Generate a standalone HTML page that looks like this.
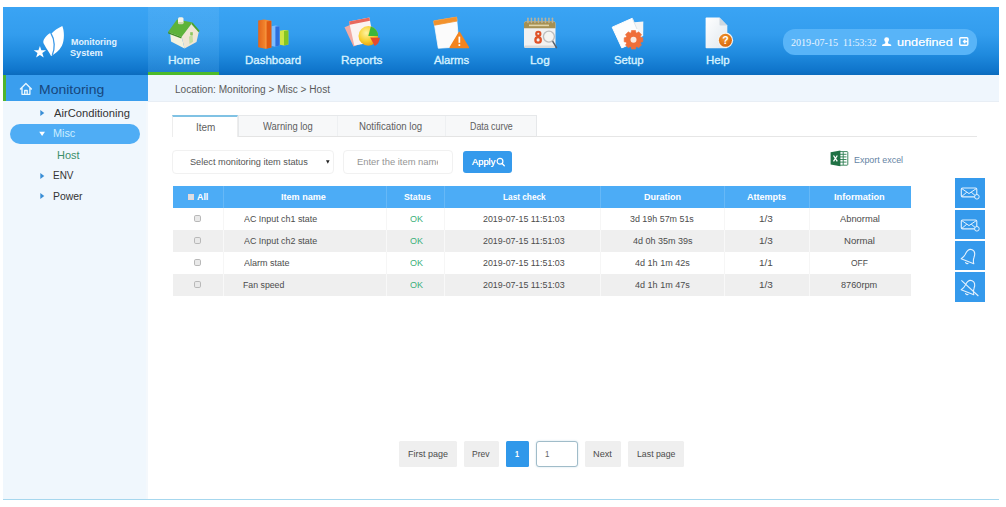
<!DOCTYPE html>
<html lang="en"><head><meta charset="utf-8"><title>Monitoring System</title>
<style>
html,body{margin:0;padding:0;background:#fff;}
body{width:1006px;height:507px;position:relative;overflow:hidden;font-family:"Liberation Sans",sans-serif;}
.t{position:absolute;white-space:nowrap;transform-origin:0 0;}
.b{position:absolute;box-sizing:border-box;}
svg{position:absolute;overflow:visible;}
</style></head><body>

<div class="b" id="hdr" style="left:3px;top:7px;width:996px;height:68.4px;background:linear-gradient(#3aa4f4 0%,#339dee 40%,#1f8ade 70%,#1076cc 92%,#0b6bbd 100%);"></div>
<div class="b" style="left:148.3px;top:7px;width:70.4px;height:68.4px;background:linear-gradient(rgba(255,255,255,0.07),rgba(120,200,255,0.18));border-bottom:3.9px solid #4dba2a;"></div>
<svg id="logo" style="left:0;top:0" width="130" height="75" viewBox="0 0 130 75">
<path d="M62.28 25.96 C64.4 30.93 64.7 39.88 61.9 45.84 C59.4 50.81 54.82 54.29 51.04 55.98 C49.35 52.8 46.37 48.83 44.38 44.85 C43.19 42.86 42.89 41.37 43.89 39.38 C45.38 36.9 47.86 34.41 49.85 33.22 L51.04 33.92 C53.83 30.93 57.8 27.95 62.28 25.96 Z" fill="#fff"/>
<path d="M51.1 33.7 C55 39.9 55 48.8 52.3 55" fill="none" stroke="#3a98e8" stroke-width="1.3"/>
<polygon points="39.9,45.9 41.4,50.3 46.1,50.3 42.3,53.1 43.7,57.6 39.9,54.9 36.1,57.6 37.5,53.1 33.7,50.3 38.4,50.3" fill="#fff"/>
</svg>
<span class="t" style="left:70.6px;top:35.64px;font-size:9.4px;line-height:12px;transform:scaleX(0.9471);color:#e2f3ff;font-weight:bold;">Monitoring</span>
<span class="t" style="left:70.3px;top:46.54px;font-size:9.4px;line-height:12px;transform:scaleX(0.9786);color:#e2f3ff;font-weight:bold;">System</span>
<span class="t" style="left:167.7px;top:52.95px;font-size:11.4px;line-height:15px;transform:scaleX(1.0460);color:#d6f2ff;-webkit-text-stroke:0.35px #d6f2ff;">Home</span>
<span class="t" style="left:244.7px;top:52.95px;font-size:11.4px;line-height:15px;transform:scaleX(1.0092);color:#d6f2ff;-webkit-text-stroke:0.35px #d6f2ff;">Dashboard</span>
<span class="t" style="left:341.0px;top:52.95px;font-size:11.4px;line-height:15px;transform:scaleX(1.0372);color:#d6f2ff;-webkit-text-stroke:0.35px #d6f2ff;">Reports</span>
<span class="t" style="left:433.5px;top:52.95px;font-size:11.4px;line-height:15px;transform:scaleX(0.9934);color:#d6f2ff;-webkit-text-stroke:0.35px #d6f2ff;">Alarms</span>
<span class="t" style="left:529.8px;top:52.95px;font-size:11.4px;line-height:15px;transform:scaleX(1.0374);color:#d6f2ff;-webkit-text-stroke:0.35px #d6f2ff;">Log</span>
<span class="t" style="left:613.9px;top:52.95px;font-size:11.4px;line-height:15px;transform:scaleX(0.9928);color:#d6f2ff;-webkit-text-stroke:0.35px #d6f2ff;">Setup</span>
<span class="t" style="left:705.7px;top:52.95px;font-size:11.4px;line-height:15px;transform:scaleX(1.0069);color:#d6f2ff;-webkit-text-stroke:0.35px #d6f2ff;">Help</span>
<svg id="ic-home" style="left:166px;top:15px" width="36" height="36" viewBox="166 15 36 36">
<polygon points="170,31.5 181.5,36 184.5,48.5 171,41.5" fill="#f3f2de"/>
<polygon points="181.5,36 191.5,23 199,31 196.5,42 184.5,48.5" fill="#efe6d4"/>
<polygon points="168,32 177,19.5 192.5,22.5 181.5,37" fill="#5db33a"/>
<polygon points="168,32 181.5,37 181.3,38.6 168.2,33.4" fill="#3f8f25"/>
<polygon points="192.5,22.5 199.6,30.8 198.6,32.2 191.5,24.2" fill="#4da32e"/>
<rect x="178" y="17.300" width="5.500" height="6.500" rx="1.500" fill="#f6f4e6"/>
<rect x="178" y="22" width="5.500" height="2.200" rx="1.100" fill="#cfd8b0"/>
<polygon points="189,36.800 192.5,34.200 193,41.800 189.5,44" fill="#c4dea0"/>
<rect x="190.200" y="32.200" width="2.600" height="3" fill="#8cc65e"/>
</svg>
<svg id="ic-dash" style="left:255px;top:15px" width="36" height="36" viewBox="255 15 36 36">
<defs>
<linearGradient id="go" x1="0" x2="1"><stop offset="0" stop-color="#e2641a"/><stop offset="0.6" stop-color="#f58a30"/><stop offset="1" stop-color="#f58a30"/></linearGradient>
<linearGradient id="gb" x1="0" x2="1"><stop offset="0" stop-color="#6fb4ff"/><stop offset="1" stop-color="#2a78e0"/></linearGradient>
<linearGradient id="gg" x1="0" x2="1"><stop offset="0" stop-color="#c6e23a"/><stop offset="1" stop-color="#8cc81e"/></linearGradient>
</defs>
<polygon points="279.8,30.8 284,30 288.3,30.600 288.3,44.400 284,45.600 279.8,44.800" fill="#cfe646"/>
<polygon points="284,30.9 288.3,30.600 288.3,44.400 284,45.600" fill="#86c522"/>
<polygon points="271.5,26.2 275.4,25.400 279.6,26.2 279.6,45.600 275.4,46.800 271.5,46" fill="#7dbdff"/>
<polygon points="275.4,26.5 279.6,26.2 279.6,45.600 275.4,46.800" fill="#2c6fdc"/>
<polygon points="258.2,20.5 264,19.6 271.3,20.8 271.3,47.6 265.5,48.8 258.2,47.2" fill="url(#go)"/>
<polygon points="266.300,21.5 271.3,20.8 271.3,47.6 266.300,48.8" fill="#df5a12"/>
<path d="M266 21.300 V48.600" stroke="#f9a050" stroke-width="0.7"/>
</svg>
<svg id="ic-rep" style="left:342px;top:15px" width="42" height="36" viewBox="342 15 42 36">
<defs><radialGradient id="gy" cx="0.4" cy="0.35" r="0.7"><stop offset="0" stop-color="#fff3a0"/><stop offset="0.6" stop-color="#f7cf2e"/><stop offset="1" stop-color="#e89a10"/></radialGradient></defs>
<polygon points="344.5,27.3 363,19.5 371,40 353.5,46.5" fill="#f2aaa2"/>
<polygon points="349,21.5 369.4,17.5 374,42 354.3,45.5" fill="#fbf3f1"/>
<polygon points="349,21.5 369.4,17.5 370,20.700 349.700,24.800" fill="#e8685c"/>
<circle cx="368.3" cy="35.9" r="9.8" fill="url(#gy)"/>
<path d="M368.3 35.9 L370.84 26.43 A9.8 9.8 0 0 1 378.1 35.9 Z" fill="#3cb63a"/>
<path d="M370.2 37.4 L379.79 37.74 A9.6 9.6 0 0 1 374.71 45.88 Z" fill="#e54a2e"/>
</svg>
<svg id="ic-alm" style="left:430px;top:15px" width="42" height="36" viewBox="430 15 42 36">
<polygon points="433.9,21.1 456.5,17.3 459.2,47 438.3,48.2" fill="#fbfbfb" stroke="#fbfbfb" stroke-width="0.8" stroke-linejoin="round"/>
<polygon points="433.7,20.9 456.6,17.1 457,21.1 434.4,25.2" fill="#f2922c" stroke="#f2922c" stroke-width="0.8" stroke-linejoin="round"/>
<polygon points="459.3,32.6 468.2,47.4 450.4,47.4" fill="#f4841e" stroke="#f4841e" stroke-width="1.800" stroke-linejoin="round"/>
<rect x="458.5" y="36.6" width="1.7" height="6.2" fill="#fff"/><rect x="458.5" y="44.2" width="1.7" height="1.8" fill="#fff"/>
</svg>
<svg id="ic-log" style="left:520px;top:15px" width="42" height="36" viewBox="520 15 42 36">
<rect x="524" y="21.3" width="31.5" height="26.6" rx="2.5" fill="#f1f1f1"/>
<path d="M526.5 21.3 H553 a2.5 2.5 0 0 1 2.5 2.5 V28.2 H524 V23.8 a2.5 2.5 0 0 1 2.500 -2.5 Z" fill="#a59052"/>
<rect x="524" y="45.6" width="31.5" height="2.3" rx="1.2" fill="#d9d9d9"/>
<g fill="#b9b39c"><rect x="527.2" y="17.600" width="1.500" height="5.600" rx="0.7"/><rect x="530.7" y="17.600" width="1.500" height="5.600" rx="0.7"/><rect x="534.2" y="17.600" width="1.500" height="5.600" rx="0.7"/><rect x="537.7" y="17.600" width="1.500" height="5.600" rx="0.7"/><rect x="541.2" y="17.600" width="1.500" height="5.600" rx="0.7"/><rect x="544.7" y="17.600" width="1.500" height="5.600" rx="0.7"/><rect x="548.2" y="17.600" width="1.500" height="5.600" rx="0.7"/><rect x="551.7" y="17.600" width="1.500" height="5.600" rx="0.7"/></g>
<rect x="529" y="24.6" width="20" height="1.6" fill="#f0e6c0" opacity="0.8"/>
<circle cx="538.3" cy="33.8" r="2.1" fill="none" stroke="#df5228" stroke-width="2.1"/><circle cx="538.1" cy="39.9" r="2.700" fill="none" stroke="#df5228" stroke-width="2.300"/>
<circle cx="548.900" cy="36.600" r="5.500" fill="#f4f4f2" stroke="#bdbdbd" stroke-width="1.400"/>
<path d="M552.900 41.600 L556.500 47.600" stroke="#5a6068" stroke-width="1.500" stroke-linecap="round"/>
</svg>
<svg id="ic-set" style="left:608px;top:15px" width="42" height="36" viewBox="608 15 42 36">
<polygon points="634.2,22.3 643.3,21.400 643.2,36 634.5,40" fill="#f4f5f6"/>
<polygon points="612.2,27.2 632.2,18.300 641.5,39 621.8,47.900" fill="#fdfdfd" stroke="#fdfdfd" stroke-width="1" stroke-linejoin="round"/>
<path d="M632.6 18.9 L637 29" stroke="#c9d3dc" stroke-width="0.6"/>
<g transform="translate(633.5 39.8)">
<g fill="#ef6f3a" stroke="#ef6f3a" stroke-width="0.6" stroke-linejoin="round">
<circle r="7.400"/>
<path transform="rotate(0)" d="M-2.500 -6.500 L-2 -9.300 H2 L2.500 -6.500 Z"/><path transform="rotate(45)" d="M-2.500 -6.500 L-2 -9.300 H2 L2.500 -6.500 Z"/><path transform="rotate(90)" d="M-2.500 -6.500 L-2 -9.300 H2 L2.500 -6.500 Z"/><path transform="rotate(135)" d="M-2.500 -6.500 L-2 -9.300 H2 L2.500 -6.500 Z"/><path transform="rotate(180)" d="M-2.500 -6.500 L-2 -9.300 H2 L2.500 -6.500 Z"/><path transform="rotate(225)" d="M-2.500 -6.500 L-2 -9.300 H2 L2.500 -6.500 Z"/><path transform="rotate(270)" d="M-2.500 -6.500 L-2 -9.300 H2 L2.500 -6.500 Z"/><path transform="rotate(315)" d="M-2.500 -6.500 L-2 -9.300 H2 L2.500 -6.500 Z"/>
</g>
<circle r="3" fill="#f9e9e0"/>
</g>
</svg>
<svg id="ic-help" style="left:700px;top:15px" width="42" height="36" viewBox="700 15 42 36">
<defs><linearGradient id="gd" x1="0" x2="1" y1="0" y2="1"><stop offset="0" stop-color="#ffffff"/><stop offset="1" stop-color="#dfe7ee"/></linearGradient>
<radialGradient id="gq" cx="0.4" cy="0.35" r="0.7"><stop offset="0" stop-color="#f39a2e"/><stop offset="1" stop-color="#d6620a"/></radialGradient></defs>
<path d="M706.400 17.600 H719.500 L727.300 25.600 V47.400 a0.800 0.800 0 0 1 -0.800 0.800 H706.400 a0.800 0.800 0 0 1 -0.800 -0.800 V18.400 a0.800 0.800 0 0 1 0.800 -0.800 Z" fill="url(#gd)"/>
<path d="M719.500 17.600 L727.300 25.600 H720.300 a0.800 0.800 0 0 1 -0.800 -0.800 Z" fill="#cfd8e0"/>
<circle cx="725.400" cy="40.300" r="7.700" fill="#f4f4f0"/>
<circle cx="725.400" cy="40.300" r="6.500" fill="url(#gq)"/>
<text x="725.400" y="44.1" font-family="Liberation Sans, sans-serif" font-weight="bold" font-size="10.5" text-anchor="middle" fill="#fff">?</text>
</svg>
<div class="b" style="left:782.9px;top:29px;width:194.6px;height:26.200px;border-radius:12px;background:#58b4f8;"></div>
<span class="t" style="left:791.4px;top:35.76px;font-size:10.2px;line-height:13px;transform:scaleX(0.9881);color:#eaf5ff;font-family:'Liberation Serif',serif;">2019-07-15</span>
<span class="t" style="left:843.1px;top:35.76px;font-size:10.2px;line-height:13px;transform:scaleX(0.9319);color:#eaf5ff;font-family:'Liberation Serif',serif;">11:53:32</span>
<svg style="left:881px;top:36px" width="12" height="12" viewBox="881 36 12 12"><circle cx="886.65" cy="39.7" r="2.45" fill="#fff"/><path d="M885.6 41 h2.1 l0.5 2.4 l2.6 1 a0.6 0.6 0 0 1 0.4 0.6 v1.1 h-9.100 v-1.1 a0.6 0.6 0 0 1 0.4 -0.6 l2.6 -1 Z" fill="#fff"/></svg>
<span class="t" style="left:897.1px;top:34.28px;font-size:11.6px;line-height:15px;transform:scaleX(1.0935);color:#f4faff;text-shadow:0 0 0.5px #f4faff;">undefined</span>
<svg style="left:959px;top:36px" width="12" height="12" viewBox="959 36 12 12"><rect x="959.8" y="37.7" width="8" height="7.600" rx="1" fill="none" stroke="#fff" stroke-width="1.400"/><path d="M968 41.5 H963.6 M965.3 39.7 L963.5 41.5 L965.3 43.3" stroke="#fff" stroke-width="1.300" fill="none"/></svg>
<div class="b" style="left:3px;top:75.4px;width:144.6px;height:423.6px;background:#f0f7fd;"></div>
<div class="b" style="left:145.600px;top:102px;width:2px;height:397px;background:#f4f8fc;"></div>
<div class="b" style="left:3px;top:75.4px;width:144.5px;height:25.900px;background:#3a9eee;border-left:3.6px solid #4fb52e;"></div>
<svg style="left:19px;top:82px" width="14" height="14" viewBox="19 82 14 14"><path d="M20.400 89 L25.900 83.500 L31.400 89 M22 87.800 V94.300 H29.900 V87.800 M24.700 94.300 V90.500 H27.200 V94.300" fill="none" stroke="#e6f6ff" stroke-width="1.350" stroke-linejoin="round" stroke-linecap="round"/></svg>
<span class="t" style="left:38.6px;top:81.33px;font-size:13.2px;line-height:17px;transform:scaleX(1.0586);color:#17467c;">Monitoring</span>
<div class="b" style="left:10.100px;top:123.5px;width:130.100px;height:20.600px;border-radius:10.300px;background:#4fadf5;"></div>
<svg style="left:40.2px;top:109.3px" width="6" height="8" viewBox="0 0 6 8"><polygon points="0.300,1.100 4.300,4 0.300,6.900" fill="#3a8fd6"/></svg>
<span class="t" style="left:54.2px;top:105.89px;font-size:11px;line-height:14px;transform:scaleX(1.0179);color:#333;">AirConditioning</span>
<svg style="left:39.4px;top:130.6px" width="8" height="6" viewBox="0 0 8 6"><polygon points="0.200,0.800 6,0.800 3.100,5" fill="#fff"/></svg>
<span class="t" style="left:53.3px;top:126.49px;font-size:11px;line-height:14px;transform:scaleX(0.9852);color:#cbeeff;">Misc</span>
<span class="t" style="left:57.3px;top:147.79px;font-size:11px;line-height:14px;transform:scaleX(0.9983);color:#3b8f6a;">Host</span>
<svg style="left:40.2px;top:171.6px" width="6" height="8" viewBox="0 0 6 8"><polygon points="0.300,1.100 4.300,4 0.300,6.900" fill="#3a8fd6"/></svg>
<span class="t" style="left:53.4px;top:168.29px;font-size:11px;line-height:14px;transform:scaleX(0.9045);color:#333;">ENV</span>
<svg style="left:40.2px;top:192.4px" width="6" height="8" viewBox="0 0 6 8"><polygon points="0.300,1.100 4.300,4 0.300,6.900" fill="#3a8fd6"/></svg>
<span class="t" style="left:53.3px;top:189.09px;font-size:11px;line-height:14px;transform:scaleX(0.9470);color:#333;">Power</span>
<div class="b" style="left:147.600px;top:75.4px;width:851.400px;height:26.800px;background:#eff6fd;border-bottom:1.500px solid #e8eef5;"></div>
<span class="t" style="left:174.7px;top:82.53px;font-size:10px;line-height:13px;transform:scaleX(1.0067);color:#5a5a5a;">Location: Monitoring &gt; Misc &gt; Host</span>
<div class="b" style="left:172.300px;top:136.200px;width:804.500px;height:1px;background:#e6e6e6;"></div>
<div class="b" style="left:238px;top:115.200px;width:298.500px;height:22px;background:#f7f8f9;border:1px solid #e6e8ea;border-bottom:1px solid #e4e4e4;"></div>
<div class="b" style="left:336.500px;top:116.200px;width:1px;height:20px;background:#eef0f2;"></div>
<div class="b" style="left:444.500px;top:116.200px;width:1px;height:20px;background:#eef0f2;"></div>
<div class="b" style="left:172.300px;top:115.200px;width:66px;height:22px;background:#fff;border-top:2.2px solid #80c2e4;border-left:1px solid #ededed;border-right:1px solid #ededed;"></div>
<span class="t" style="left:195.5px;top:120.64px;font-size:10px;line-height:13px;transform:scaleX(0.9955);color:#5e5e5e;">Item</span>
<span class="t" style="left:262.5px;top:119.94px;font-size:10px;line-height:13px;transform:scaleX(0.9405);color:#5e5e5e;">Warning log</span>
<span class="t" style="left:359.2px;top:119.94px;font-size:10px;line-height:13px;transform:scaleX(0.9637);color:#5e5e5e;">Notification log</span>
<span class="t" style="left:469.7px;top:119.94px;font-size:10px;line-height:13px;transform:scaleX(0.8834);color:#5e5e5e;">Data curve</span>
<div class="b" style="left:172.300px;top:150px;width:161.700px;height:23.500px;border:1px solid #f1f1f1;border-radius:4px;background:#fff;"></div>
<span class="t" style="left:189.5px;top:155.67px;font-size:9.6px;line-height:12px;transform:scaleX(0.9561);color:#555;">Select monitoring item status</span>
<svg style="left:325.200px;top:158.800px" width="6" height="6" viewBox="0 0 6 6"><polygon points="1,1.300 4.600,1.300 2.800,4.800" fill="#222"/></svg>
<div class="b" style="left:342.500px;top:150px;width:110.500px;height:23.500px;border:1px solid #f1f1f1;border-radius:4px;background:#fff;"></div>
<span class="t" style="left:356.7px;top:155.57px;font-size:9.6px;line-height:12px;transform:scaleX(0.9797);color:#959595;">Enter the item name</span>
<div class="b" style="left:438.3px;top:154px;width:8px;height:16px;background:#fff;"></div>
<div class="b" style="left:462.800px;top:151.200px;width:48.800px;height:21.600px;border-radius:3px;background:#359aec;"></div>
<span class="t" style="left:472.1px;top:155.40px;font-size:9.8px;line-height:13px;transform:scaleX(0.9522);color:#fff;text-shadow:0 0 0.5px #fff;">Apply</span>
<svg style="left:495.6px;top:157.2px" width="10" height="10" viewBox="0 0 10 10"><circle cx="4" cy="4.300" r="2.900" fill="none" stroke="#fff" stroke-width="1.200"/><path d="M6.100 6.500 L8.300 8.800" stroke="#fff" stroke-width="1.300" stroke-linecap="round"/></svg>
<svg style="left:830px;top:150px" width="19" height="17" viewBox="0 0 19 17">
<rect x="7.500" y="1.600" width="10.300" height="13.600" rx="0.800" fill="#fff" stroke="#2a7d4f" stroke-width="0.900"/>
<path d="M10 4.300 H16.500 M10 6.900 H16.500 M10 9.500 H16.500 M10 12.100 H16.500 M13.200 2 V15" stroke="#2a7d4f" stroke-width="0.900"/>
<path d="M0.600 2.200 L10.400 0.500 V16.300 L0.600 14.600 Z" fill="#207245"/>
<path d="M3.500 5.500 L7.300 11.300 M7.300 5.500 L3.500 11.300" stroke="#fff" stroke-width="1.300"/>
</svg>
<span class="t" style="left:854.3px;top:154.47px;font-size:9.6px;line-height:12px;transform:scaleX(0.9300);color:#6584a4;">Export excel</span>
<div class="b" style="left:172.5px;top:186.0px;width:738.7px;height:21.8px;background:#4cacf6;"></div>
<div class="b" style="left:172.5px;top:229.7px;width:738.7px;height:22.2px;background:#efefef;"></div>
<div class="b" style="left:172.5px;top:273.6px;width:738.7px;height:22.4px;background:#efefef;"></div>
<div class="b" style="left:222.5px;top:186.0px;width:1px;height:21.8px;background:#66b8f7;"></div>
<div class="b" style="left:222.5px;top:207.8px;width:1px;height:88.2px;background:rgba(255,255,255,0.55);"></div>
<div class="b" style="left:386.1px;top:186.0px;width:1px;height:21.8px;background:#66b8f7;"></div>
<div class="b" style="left:386.1px;top:207.8px;width:1px;height:88.2px;background:rgba(255,255,255,0.55);"></div>
<div class="b" style="left:443.8px;top:186.0px;width:1px;height:21.8px;background:#66b8f7;"></div>
<div class="b" style="left:443.8px;top:207.8px;width:1px;height:88.2px;background:rgba(255,255,255,0.55);"></div>
<div class="b" style="left:600.1px;top:186.0px;width:1px;height:21.8px;background:#66b8f7;"></div>
<div class="b" style="left:600.1px;top:207.8px;width:1px;height:88.2px;background:rgba(255,255,255,0.55);"></div>
<div class="b" style="left:723.5px;top:186.0px;width:1px;height:21.8px;background:#66b8f7;"></div>
<div class="b" style="left:723.5px;top:207.8px;width:1px;height:88.2px;background:rgba(255,255,255,0.55);"></div>
<div class="b" style="left:808.5px;top:186.0px;width:1px;height:21.8px;background:#66b8f7;"></div>
<div class="b" style="left:808.5px;top:207.8px;width:1px;height:88.2px;background:rgba(255,255,255,0.55);"></div>
<div class="b" style="left:222.5px;top:207.8px;width:1px;height:21.9px;background:#f6f6f6;"></div>
<div class="b" style="left:222.5px;top:251.9px;width:1px;height:21.7px;background:#f6f6f6;"></div>
<div class="b" style="left:386.1px;top:207.8px;width:1px;height:21.9px;background:#f6f6f6;"></div>
<div class="b" style="left:386.1px;top:251.9px;width:1px;height:21.7px;background:#f6f6f6;"></div>
<div class="b" style="left:443.8px;top:207.8px;width:1px;height:21.9px;background:#f6f6f6;"></div>
<div class="b" style="left:443.8px;top:251.9px;width:1px;height:21.7px;background:#f6f6f6;"></div>
<div class="b" style="left:600.1px;top:207.8px;width:1px;height:21.9px;background:#f6f6f6;"></div>
<div class="b" style="left:600.1px;top:251.9px;width:1px;height:21.7px;background:#f6f6f6;"></div>
<div class="b" style="left:723.5px;top:207.8px;width:1px;height:21.9px;background:#f6f6f6;"></div>
<div class="b" style="left:723.5px;top:251.9px;width:1px;height:21.7px;background:#f6f6f6;"></div>
<div class="b" style="left:808.5px;top:207.8px;width:1px;height:21.9px;background:#f6f6f6;"></div>
<div class="b" style="left:808.5px;top:251.9px;width:1px;height:21.7px;background:#f6f6f6;"></div>
<div class="b" style="left:188.300px;top:193.900px;width:6px;height:6px;background:#d4e2ec;border:1px solid #ead8d6;"></div>
<span class="t" style="left:196.5px;top:191.52px;font-size:8.6px;line-height:11px;transform:scaleX(1.0312);color:#fff;font-weight:bold;">All</span>
<span class="t" style="left:281.4px;top:191.52px;font-size:8.6px;line-height:11px;transform:scaleX(1.0534);color:#fff;font-weight:bold;">Item name</span>
<span class="t" style="left:403.7px;top:191.52px;font-size:8.6px;line-height:11px;transform:scaleX(1.0235);color:#fff;font-weight:bold;">Status</span>
<span class="t" style="left:503.1px;top:191.52px;font-size:8.6px;line-height:11px;transform:scaleX(0.9612);color:#fff;font-weight:bold;">Last check</span>
<span class="t" style="left:644.1px;top:191.52px;font-size:8.6px;line-height:11px;transform:scaleX(1.0510);color:#fff;font-weight:bold;">Duration</span>
<span class="t" style="left:746.8px;top:191.52px;font-size:8.6px;line-height:11px;transform:scaleX(1.0487);color:#fff;font-weight:bold;">Attempts</span>
<span class="t" style="left:834.2px;top:191.52px;font-size:8.6px;line-height:11px;transform:scaleX(1.0736);color:#fff;font-weight:bold;">Information</span>
<div class="b" style="left:194.300px;top:214.7px;width:6.600px;height:7.200px;border:1px solid #b8b8b8;border-radius:1.800px;background:#e9e9e9;"></div>
<span class="t" style="left:243.9px;top:212.57px;font-size:9.6px;line-height:12px;transform:scaleX(0.9269);color:#4c4c4c;">AC Input ch1 state</span>
<span class="t" style="left:410.4px;top:212.57px;font-size:9.6px;line-height:12px;transform:scaleX(0.9388);color:#3cb07a;">OK</span>
<span class="t" style="left:483.4px;top:212.57px;font-size:9.6px;line-height:12px;transform:scaleX(0.9242);color:#4c4c4c;">2019-07-15 11:51:03</span>
<span class="t" style="left:630.3px;top:212.57px;font-size:9.6px;line-height:12px;transform:scaleX(0.9275);color:#4c4c4c;">3d 19h 57m 51s</span>
<span class="t" style="left:758.9px;top:212.57px;font-size:9.6px;line-height:12px;transform:scaleX(1.0408);color:#4c4c4c;">1/3</span>
<span class="t" style="left:840.0px;top:212.57px;font-size:9.6px;line-height:12px;transform:scaleX(0.9719);color:#4c4c4c;">Abnormal</span>
<div class="b" style="left:194.300px;top:236.7px;width:6.600px;height:7.200px;border:1px solid #b8b8b8;border-radius:1.800px;background:#e9e9e9;"></div>
<span class="t" style="left:243.9px;top:234.62px;font-size:9.6px;line-height:12px;transform:scaleX(0.9269);color:#4c4c4c;">AC Input ch2 state</span>
<span class="t" style="left:410.4px;top:234.62px;font-size:9.6px;line-height:12px;transform:scaleX(0.9388);color:#3cb07a;">OK</span>
<span class="t" style="left:483.4px;top:234.62px;font-size:9.6px;line-height:12px;transform:scaleX(0.9242);color:#4c4c4c;">2019-07-15 11:51:03</span>
<span class="t" style="left:632.7px;top:234.62px;font-size:9.6px;line-height:12px;transform:scaleX(0.9372);color:#4c4c4c;">4d 0h 35m 39s</span>
<span class="t" style="left:758.9px;top:234.62px;font-size:9.6px;line-height:12px;transform:scaleX(1.0408);color:#4c4c4c;">1/3</span>
<span class="t" style="left:844.0px;top:234.62px;font-size:9.6px;line-height:12px;transform:scaleX(0.9993);color:#4c4c4c;">Normal</span>
<div class="b" style="left:194.300px;top:258.6px;width:6.600px;height:7.200px;border:1px solid #b8b8b8;border-radius:1.800px;background:#e9e9e9;"></div>
<span class="t" style="left:243.9px;top:256.67px;font-size:9.6px;line-height:12px;transform:scaleX(0.9396);color:#4c4c4c;">Alarm state</span>
<span class="t" style="left:410.4px;top:256.67px;font-size:9.6px;line-height:12px;transform:scaleX(0.9388);color:#3cb07a;">OK</span>
<span class="t" style="left:483.4px;top:256.67px;font-size:9.6px;line-height:12px;transform:scaleX(0.9242);color:#4c4c4c;">2019-07-15 11:51:03</span>
<span class="t" style="left:634.6px;top:256.67px;font-size:9.6px;line-height:12px;transform:scaleX(0.9424);color:#4c4c4c;">4d 1h 1m 42s</span>
<span class="t" style="left:758.9px;top:256.67px;font-size:9.6px;line-height:12px;transform:scaleX(1.0450);color:#4c4c4c;">1/1</span>
<span class="t" style="left:851.2px;top:256.67px;font-size:9.6px;line-height:12px;transform:scaleX(0.8767);color:#4c4c4c;">OFF</span>
<div class="b" style="left:194.300px;top:280.7px;width:6.600px;height:7.200px;border:1px solid #b8b8b8;border-radius:1.800px;background:#e9e9e9;"></div>
<span class="t" style="left:243.2px;top:278.72px;font-size:9.6px;line-height:12px;transform:scaleX(0.9122);color:#4c4c4c;">Fan speed</span>
<span class="t" style="left:410.4px;top:278.72px;font-size:9.6px;line-height:12px;transform:scaleX(0.9388);color:#3cb07a;">OK</span>
<span class="t" style="left:483.4px;top:278.72px;font-size:9.6px;line-height:12px;transform:scaleX(0.9242);color:#4c4c4c;">2019-07-15 11:51:03</span>
<span class="t" style="left:634.6px;top:278.72px;font-size:9.6px;line-height:12px;transform:scaleX(0.9424);color:#4c4c4c;">4d 1h 1m 47s</span>
<span class="t" style="left:758.9px;top:278.72px;font-size:9.6px;line-height:12px;transform:scaleX(1.0408);color:#4c4c4c;">1/3</span>
<span class="t" style="left:841.4px;top:278.72px;font-size:9.6px;line-height:12px;transform:scaleX(0.9551);color:#4c4c4c;">8760rpm</span>
<div class="b" style="left:954.800px;top:177.8px;width:30.200px;height:29.9px;background:#359aec;"></div>
<div class="b" style="left:954.800px;top:209.5px;width:30.200px;height:29.5px;background:#359aec;"></div>
<div class="b" style="left:954.800px;top:240.9px;width:30.200px;height:29.1px;background:#359aec;"></div>
<div class="b" style="left:954.800px;top:272.1px;width:30.200px;height:29.8px;background:#359aec;"></div>
<svg style="left:954.800px;top:177.8px" width="30.200" height="30" viewBox="0 0 30.200 30"><rect x="6.300" y="10" width="15.500" height="8.900" rx="1.300" fill="none" stroke="#e4f1fd" stroke-width="1.100"/><path d="M6.800 10.600 L14 15.600 L21.300 10.600 M6.800 18.400 L11.800 14.200 M21.300 18.400 L16.200 14.200" fill="none" stroke="#e4f1fd" stroke-width="1"/><circle cx="21.900" cy="18.800" r="2.300" fill="#359aec" stroke="#e4f1fd" stroke-width="1"/></svg>
<svg style="left:954.800px;top:209.5px" width="30.200" height="30" viewBox="0 0 30.200 30"><rect x="6.300" y="10" width="15.500" height="8.900" rx="1.300" fill="none" stroke="#e4f1fd" stroke-width="1.100"/><path d="M6.800 10.600 L14 15.600 L21.300 10.600 M6.800 18.400 L11.800 14.200 M21.300 18.400 L16.200 14.200" fill="none" stroke="#e4f1fd" stroke-width="1"/><circle cx="21.900" cy="18.800" r="2.300" fill="#359aec" stroke="#e4f1fd" stroke-width="1"/></svg>
<svg style="left:954.800px;top:240.9px" width="30.200" height="30" viewBox="0 0 30.200 30"><g transform="translate(0.400 1) rotate(22 14 14.500)"><path d="M14 7.200 C10.800 7.200 9.600 10 9.400 13.500 C9.300 16.500 8.300 18.200 7.200 19.600 H20.800 C19.700 18.200 18.700 16.500 18.600 13.500 C18.400 10 17.200 7.200 14 7.200 Z M12.500 21 a1.600 1.600 0 0 0 3 0" fill="none" stroke="#e4f1fd" stroke-width="1.100" stroke-linejoin="round"/></g></svg>
<svg style="left:954.800px;top:272.1px" width="30.200" height="30" viewBox="0 0 30.200 30"><g transform="translate(0.400 1) rotate(22 14 14.500)"><path d="M14 7.200 C10.800 7.200 9.600 10 9.400 13.500 C9.300 16.500 8.300 18.200 7.200 19.600 H20.800 C19.700 18.200 18.700 16.500 18.600 13.500 C18.400 10 17.200 7.200 14 7.200 Z M12.500 21 a1.600 1.600 0 0 0 3 0" fill="none" stroke="#e4f1fd" stroke-width="1.100" stroke-linejoin="round"/></g><path d="M6.400 8.400 L23.400 24" stroke="#e4f1fd" stroke-width="1.100"/></svg>
<div class="b" style="left:399.3px;top:441px;width:57.7px;height:26.3px;background:#efefef;border-radius:1.500px;"></div>
<span class="t" style="left:408.1px;top:448.27px;font-size:9.6px;line-height:12px;transform:scaleX(0.9356);color:#4c4c4c;">First page</span>
<div class="b" style="left:463.5px;top:441px;width:35.5px;height:26.3px;background:#efefef;border-radius:1.500px;"></div>
<span class="t" style="left:472.3px;top:448.27px;font-size:9.6px;line-height:12px;transform:scaleX(0.8879);color:#4c4c4c;">Prev</span>
<div class="b" style="left:506px;top:441px;width:22.7px;height:26.3px;background:#3098ea;border-radius:1.500px;"></div>
<span class="t" style="left:515.1px;top:448.27px;font-size:9.6px;line-height:12px;transform:scaleX(0.7584);color:#fff;font-weight:bold;">1</span>
<div class="b" style="left:535.500px;top:441px;width:42.200px;height:26.3px;background:#fff;border:1px solid #a0bcc9;border-radius:3px;box-shadow:0 0 2px rgba(120,170,200,0.4);"></div>
<span class="t" style="left:545.0px;top:448.27px;font-size:9.6px;line-height:12px;transform:scaleX(0.8198);color:#666;">1</span>
<div class="b" style="left:584.5px;top:441px;width:36.5px;height:26.3px;background:#efefef;border-radius:1.500px;"></div>
<span class="t" style="left:592.9px;top:448.27px;font-size:9.6px;line-height:12px;transform:scaleX(0.9585);color:#4c4c4c;">Next</span>
<div class="b" style="left:628.4px;top:441px;width:55.6px;height:26.3px;background:#efefef;border-radius:1.500px;"></div>
<span class="t" style="left:636.9px;top:448.27px;font-size:9.6px;line-height:12px;transform:scaleX(0.9132);color:#4c4c4c;">Last page</span>
<div class="b" style="left:3px;top:498.5px;width:996px;height:1px;background:#a6d7ee;"></div>

</body></html>
